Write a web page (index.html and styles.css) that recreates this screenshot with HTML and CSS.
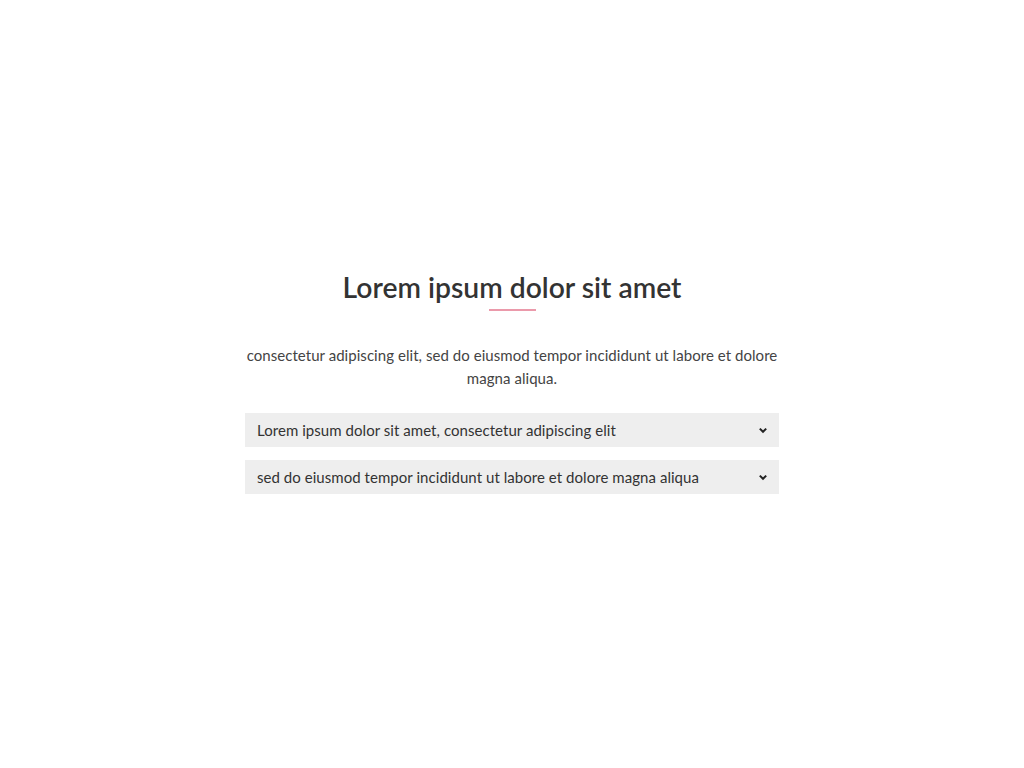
FILE: index.html
```html
<!DOCTYPE html>
<html lang="en">
<head>
<meta charset="utf-8">
<title>FAQ</title>
<link rel="stylesheet" href="styles.css">
</head>
<body>
<main class="page">
  <section class="faq">
    <h1 class="faq-title">Lorem ipsum dolor sit amet</h1>
    <div class="faq-rule"></div>
    <p class="faq-intro">consectetur adipiscing elit, sed do eiusmod tempor incididunt ut labore et dolore magna aliqua.</p>
    <div class="faq-list">
      <div class="faq-item">
        <span class="faq-q">Lorem ipsum dolor sit amet, consectetur adipiscing elit</span>
        <svg class="chev" width="10" height="7" viewBox="0 0 10 7"><path d="M1.8 1.6 L5 4.8 L8.2 1.6" fill="none" stroke="#222" stroke-width="2"/></svg>
      </div>
      <div class="faq-item">
        <span class="faq-q">sed do eiusmod tempor incididunt ut labore et dolore magna aliqua</span>
        <svg class="chev" width="10" height="7" viewBox="0 0 10 7"><path d="M1.8 1.6 L5 4.8 L8.2 1.6" fill="none" stroke="#222" stroke-width="2"/></svg>
      </div>
    </div>
  </section>
</main>
</body>
</html>
```

FILE: styles.css
```css
* { box-sizing: border-box; }
html, body { margin: 0; padding: 0; background: #fff; }
body {
  font-family: Lato, "Noto Sans", sans-serif;
  color: #333;
}
.page {
  min-height: 768px;
  padding-bottom: 4px;
  display: flex;
  align-items: center;
  justify-content: center;
}
.faq {
  width: 534px;
  display: flex;
  flex-direction: column;
  align-items: center;
}
.faq-title {
  margin: 0;
  font-size: 28.3px;
  font-weight: 600;
  line-height: 34px;
  color: #333;
}
.faq-rule {
  width: 47px;
  height: 2px;
  background: #eb9aab;
  margin-top: 5px;
}
.faq-intro {
  margin: 33px 0 0;
  font-size: 15px;
  line-height: 23px;
  text-align: center;
  color: #444;
  letter-spacing: 0.05px;
  width: 534px;
}
.faq-list {
  width: 100%;
  margin-top: 23px;
  display: flex;
  flex-direction: column;
  gap: 13px;
}
.faq-item {
  height: 34px;
  background: #eeeeee;
  display: flex;
  align-items: center;
  justify-content: space-between;
  padding: 0 11px 0 12px;
}
.faq-q {
  font-size: 15px;
  color: #333;
  letter-spacing: 0.05px;
}
.chev { flex: none; }
```
